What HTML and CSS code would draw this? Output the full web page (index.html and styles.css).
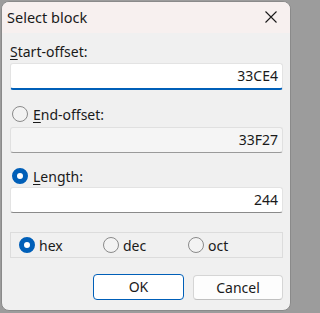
FILE: index.html
```html
<!DOCTYPE html>
<html>
<head>
<meta charset="utf-8">
<link rel="stylesheet" href="styles.css">
</head>
<body>
<div class="window">
  <div class="titlebar">
    <span class="title">Select block</span>
    <svg class="close" width="12" height="12" viewBox="0 0 12 12"><path d="M0.5 0.5 L11.5 11.5 M11.5 0.5 L0.5 11.5" stroke="#1a1a1a" stroke-width="1.1" fill="none"/></svg>
  </div>
  <div class="content">
    <div class="label first"><u>S</u>tart-offset:</div>
    <div class="field focused">33CE4</div>
    <div class="radio-row second"><span class="radio"></span><span><u>E</u>nd-offset:</span></div>
    <div class="field disabled">33F27</div>
    <div class="radio-row third"><span class="radio checked"></span><span><u>L</u>ength:</span></div>
    <div class="field normal">244</div>
    <div class="group">
      <div class="opt"><span class="radio checked"></span><span>hex</span></div>
      <div class="opt"><span class="radio"></span><span>dec</span></div>
      <div class="opt"><span class="radio"></span><span>oct</span></div>
    </div>
    <div class="buttons">
      <div class="btn default">OK</div>
      <div class="btn">Cancel</div>
    </div>
  </div>
</div>
</body>
</html>
```
FILE: styles.css
```css
html, body {
  margin: 0;
  padding: 0;
}
body {
  width: 293px;
  height: 313px;
  background: #9c9c9c;
  font-family: "Noto Sans", "Open Sans", sans-serif;
  font-size: 14px;
  color: #1a1a1a;
  overflow: hidden;
}
.window {
  box-sizing: border-box;
  width: 290px;
  height: 310px;
  margin: 1px 0 0 1px;
  border: 1px solid #8a8a8a;
  border-radius: 8px;
  background: #f0f0f0;
  overflow: hidden;
  display: flex;
  flex-direction: column;
}
.titlebar {
  height: 31px;
  flex: none;
  background: #f7f0ef;
  display: flex;
  align-items: center;
  justify-content: space-between;
  padding: 0 13px 0 5px;
}
.title {
  font-size: 14.5px;
  line-height: 20px;
  margin-top: -2px;
}
.close {
  display: block;
  margin-top: -1px;
}
.content {
  display: flex;
  flex-direction: column;
  padding: 0 7px 0 8px;
}
u {
  text-decoration-thickness: 1px;
  text-underline-offset: 2px;
}
.label {
  line-height: 18px;
}
.first {
  margin-top: 10px;
}
.field {
  box-sizing: border-box;
  height: 26px;
  margin-top: 2px;
  text-align: right;
  padding: 0 4px 0 0;
  line-height: 24px;
  border: 1px solid #e3e3e3;
  border-bottom-color: #8a8a8a;
  border-radius: 3px;
  background: #ffffff;
}
.field.focused {
  height: 27px;
  border-bottom: 2px solid #005fb8;
}
.field.disabled {
  background: #f5f5f5;
  color: #1a1a1a;
  margin-top: 3px;
  border-color: #e0e0e0;
  border-bottom-color: #9a9a9a;
}
.field.normal {
  margin-top: 1px;
}
.radio-row {
  display: flex;
  align-items: center;
  gap: 5px;
  height: 20px;
  padding-left: 2px;
}
.second {
  margin-top: 14px;
}
.third {
  margin-top: 13px;
}
.radio {
  box-sizing: border-box;
  width: 16px;
  height: 16px;
  flex: none;
  border-radius: 50%;
  border: 1px solid #8a8a8a;
  background: #f3f3f3;
}
.radio.checked {
  border: 5px solid #005fb8;
  background: #ffffff;
}
.group {
  box-sizing: border-box;
  height: 26px;
  margin-top: 19px;
  border: 1px solid #dcdcdc;
  display: grid;
  grid-template-columns: 84px 85px 1fr;
  align-items: center;
  padding-left: 8px;
}
.opt {
  display: flex;
  align-items: center;
  gap: 4px;
}
.buttons {
  display: flex;
  justify-content: flex-end;
  gap: 9px;
  margin-top: 16px;
}
.btn {
  box-sizing: border-box;
  width: 90px;
  height: 25px;
  margin-top: 1px;
  border: 1px solid #d5d5d5;
  border-bottom-color: #c0c0c0;
  border-radius: 4px;
  background: #fdfdfd;
  text-align: center;
  line-height: 23px;
}
.btn.default {
  width: 91px;
  height: 26px;
  margin-top: 0;
  border: 1px solid #005fb8;
  background: #ffffff;
}
```
